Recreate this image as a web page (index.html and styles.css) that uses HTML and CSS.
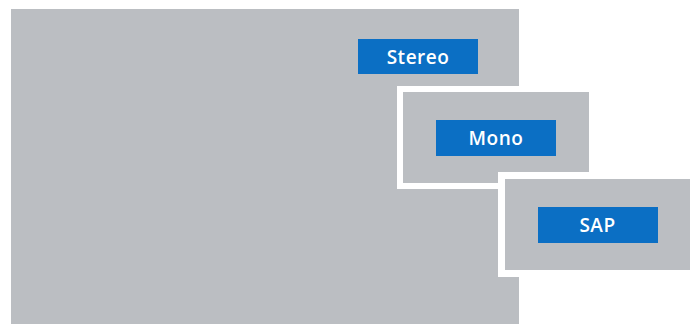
FILE: index.html
```html
<!DOCTYPE html>
<html lang="en">

<head>
    <meta charset="UTF-8">
    <title>Audio modes</title>
    <link rel="stylesheet" href="styles.css">
</head>

<body>
    <div class="screen">
        <span class="tag tag-stereo">Stereo</span>
    </div>
    <div class="panel panel-mono">
        <span class="tag">Mono</span>
    </div>
    <div class="panel panel-sap">
        <span class="tag">SAP</span>
    </div>
</body>

</html>
```

FILE: styles.css
```css
body {
    margin: 0;
    background: #fff;
    overflow: hidden;
    font-family: "Open Sans", "DejaVu Sans", sans-serif;
}

.screen {
    width: 508px;
    height: 315px;
    margin: 9px 0 0 11px;
    padding-top: 30px;
    box-sizing: border-box;
    background: #bbbec2;
}

.tag {
    display: flex;
    align-items: center;
    justify-content: center;
    width: 120px;
    height: 36px;
    background: #0b6fc4;
    color: #fff;
    font-size: 19px;
    font-weight: 600;
    letter-spacing: 0.5px;
}

.tag-stereo {
    height: 35px;
    margin-left: 347px;
}

/* panels sit on top of the screen */
.panel {
    position: absolute;
    display: flex;
    align-items: center;
    justify-content: center;
    background: #bbbec2;
}

.panel-mono {
    left: 397px;
    top: 86px;
    width: 186px;
    height: 91px;
    border: 6px solid #fff;
}

.panel-sap {
    left: 498px;
    top: 172px;
    width: 185px;
    height: 91px;
    border: 7px solid #fff;
}
```
